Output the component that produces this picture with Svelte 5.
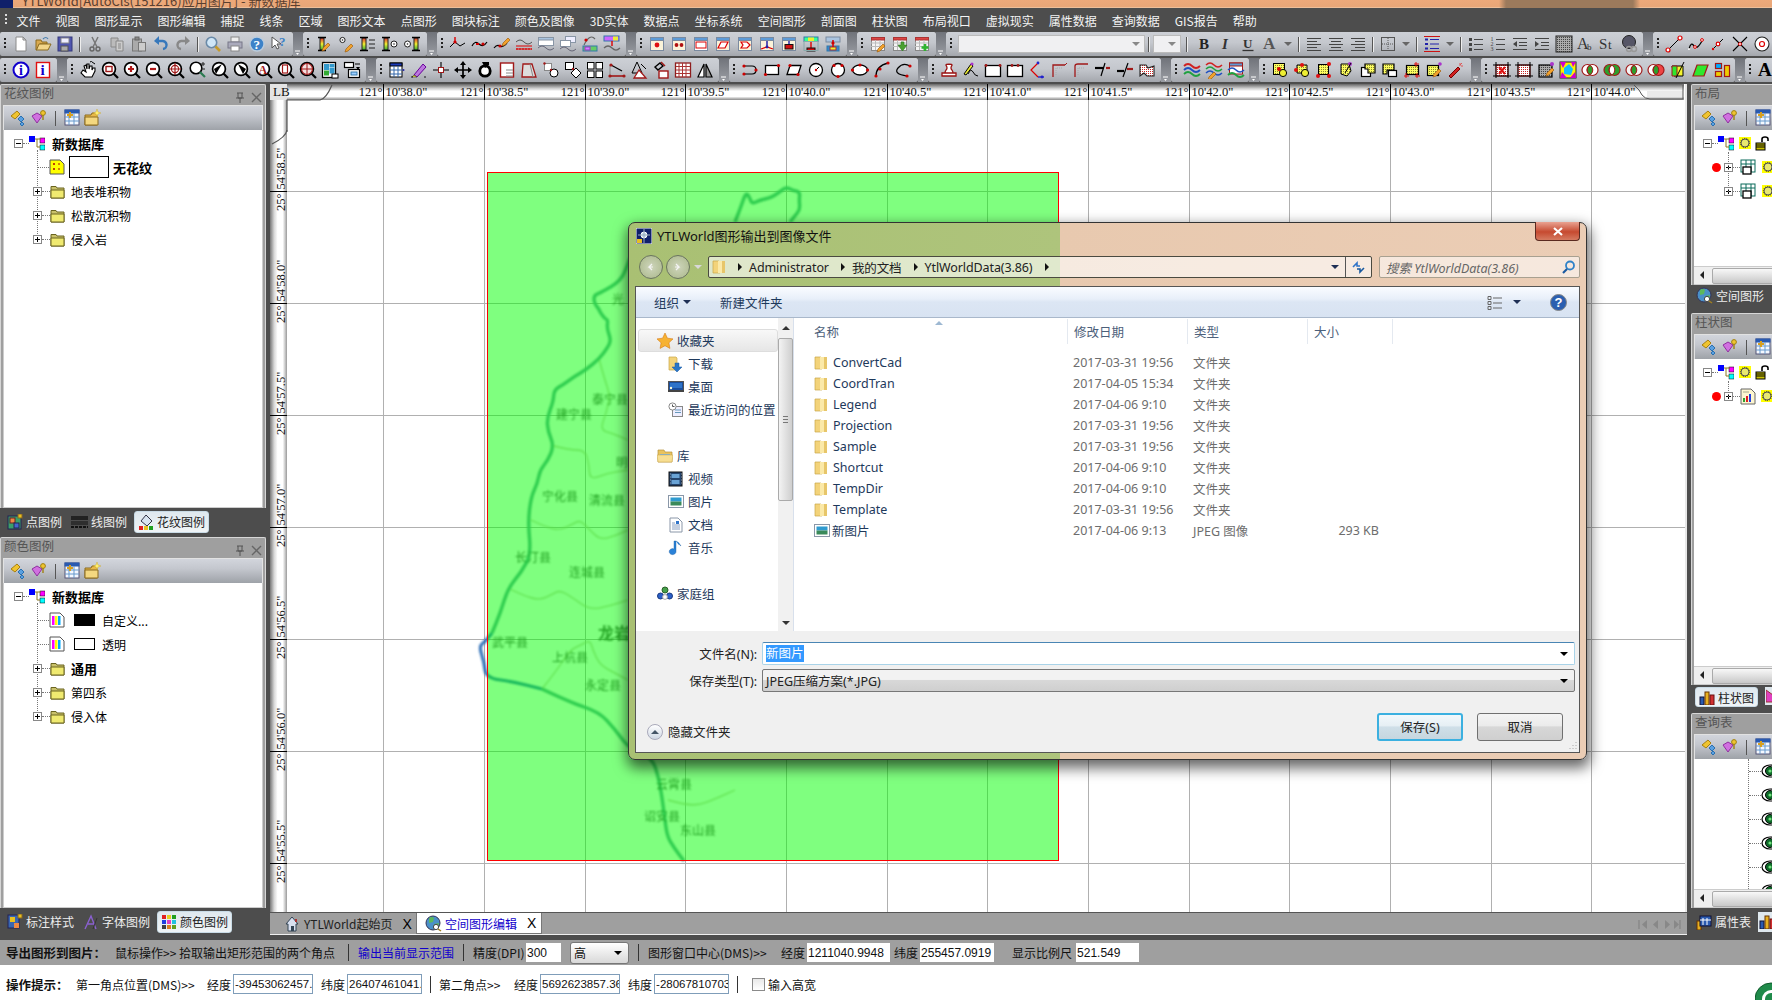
<script>
  const sv = (inner, w = 18, h = 18) => `<svg width="${w}" height="${h}" viewBox="0 0 ${w} ${h}" fill="none">${inner}</svg>`;
  const ln = (d, c = '#000', w = 1) => `<path d="${d}" stroke="${c}" stroke-width="${w}" fill="none"/>`;
  const fl = (d, c, s = 'none', w = 1) => `<path d="${d}" fill="${c}" stroke="${s}" stroke-width="${w}"/>`;
  const rc = (x, y, w, h, f = '#fff', s = '#000', sw = 1) => `<rect x="${x}" y="${y}" width="${w}" height="${h}" fill="${f}" stroke="${s}" stroke-width="${sw}"/>`;
  const dot = (x, y, c = '#c00', r = 1.6) => `<circle cx="${x}" cy="${y}" r="${r}" fill="${c}"/>`;
  const circ = (x, y, r, f = '#fff', s = '#000', w = 1) => `<circle cx="${x}" cy="${y}" r="${r}" fill="${f}" stroke="${s}" stroke-width="${w}"/>`;
  const tx = (x, y, t, size, c = '#000', extra = '') => `<text x="${x}" y="${y}" font-size="${size}" fill="${c}" font-family="Liberation Serif, serif" ${extra}>${t}</text>`;

  const mag = (inner) => sv(circ(8, 8, 6.4, '#fff', '#000', 1.7) + ln('M12.5 12.5L17 17', '#000', 2.2) + inner);
  const bar = (x) => `<defs><linearGradient id="rb" x1="0" y1="0" x2="0" y2="1"><stop offset="0" stop-color="#d33"/><stop offset=".5" stop-color="#ee3"/><stop offset="1" stop-color="#3a3"/></linearGradient></defs>${rc(x, 3, 4, 12, 'url(#rb)', '#222')}${ln(`M${x - 2} 2.5h8M${x - 2} 15.5h8`, '#000', 1.4)}`;
  const pencil = (x, y) => fl(`M${x} ${y}l5-5 2 2-5 5-3 1z`, '#f2a22c', '#a06010', 0.7);
  const win = (inner) => sv(rc(2.5, 2.5, 13, 13, '#fbf3d9', '#7a8aa0') + rc(2.5, 2.5, 13, 3, '#5e9bd8', '#7a8aa0') + inner);
  const tbl = (inner) => sv(rc(2.5, 3.5, 13, 12, '#f4f4f4', '#888') + rc(2.5, 2.5, 13, 2.5, '#d44', '#a33') + ln('M2 8h13M2 11.5h13M6.5 5v10M11 5v10', '#bbb') + inner);
  const yp = 'url(#yh)';
  const hatchDef = '<defs><pattern id="yh" width="2" height="2" patternUnits="userSpaceOnUse"><rect width="2" height="2" fill="#fdfd60"/><rect width="1" height="1" fill="#8a8a30"/></pattern><pattern id="rh" width="2" height="2" patternUnits="userSpaceOnUse"><rect width="2" height="2" fill="#fff"/><rect width="1" height="1" fill="#c22"/></pattern><pattern id="kh" width="2" height="2" patternUnits="userSpaceOnUse"><rect width="2" height="2" fill="#aaa"/><rect width="1" height="1" fill="#444"/></pattern></defs>';
  const yl = (inner) => sv(hatchDef + inner);

  const I = {
    new: sv(fl('M4 2h7l3 3v11H4z', '#fff', '#8a8a8a') + fl('M11 2v3h3z', '#ddd', '#8a8a8a')),
    open: sv(fl('M2 5h5l1 2h5v2H6l-3 6H2z', '#d9a94f', '#8a6a20') + fl('M5 9h12l-3 6H2.5z', '#f2d58a', '#8a6a20') + ln('M9 4q3-3 5 0', '#4a80b0', 1.2)),
    save: sv(rc(2, 2, 14, 14, '#4f55b0', '#35387a') + rc(5, 3, 8, 5, '#eef', '#888') + rc(5, 11, 7, 5, '#aaa', '#555')),
    cut: sv(circ(6, 14, 2, 'none', '#666', 1.4) + circ(12, 14, 2, 'none', '#666', 1.4) + ln('M7 12L12 2M11 12L6 2', '#777', 1.5)),
    copy: sv(fl('M3 3h7v9H3z', '#bbb', '#888') + fl('M8 6h7v10H8z', '#ccc', '#888') + ln('M10 9h3M10 11h3M10 13h3', '#888')),
    paste: sv(rc(2.5, 4, 9, 12, '#aaa', '#777') + rc(5, 2, 4, 3, '#888', '#666') + rc(8.5, 7.5, 7, 8.5, '#ccc', '#777')),
    undo: sv(ln('M5 6h5a4 4 0 0 1 1 8', '#3778bb', 2.4) + fl('M7 1v9L2 6z', '#3778bb')),
    redo: sv(ln('M13 6H8a4 4 0 0 0-1 8', '#888', 2.4) + fl('M11 1v9l5-4z', '#888')),
    find: sv(circ(7.5, 7.5, 5.2, '#cfe6f7', '#6a8aa8', 1.6) + ln('M11.5 11.5L16 16', '#c59a2a', 2.6)),
    print: sv(rc(5, 2, 8, 5, '#eee', '#888') + rc(2, 7, 14, 6, '#aab', '#778') + rc(5, 11, 8, 5, '#fff', '#888')),
    help: sv(circ(9, 9, 7, '#3d82c8', '#bcd', 1.4) + tx(5.5, 13.5, '?', 13, '#fff', 'font-weight="bold"')),
    whats: sv(fl('M2 2v11l3-3 2 4 2-1-2-4h4z', '#fff', '#555') + tx(9, 11, '?', 13, '#3d82c8', 'font-weight="bold"')),
    barp: sv(bar(5) + pencil(8, 13)),
    dotp: sv(circ(5.5, 5, 2.6, '#fff', '#222') + dot(5.5, 5, '#222', .8) + pencil(9, 14)),
    barl: sv(bar(3) + ln('M10 5h6M10 9h6M10 13h6', '#222')),
    barc: sv(bar(3) + circ(13, 9, 3, '#fff', '#222') + dot(13, 9, '#222', .8)),
    cbar: sv(circ(4.5, 9, 3, '#fff', '#222') + dot(4.5, 9, '#222', .8) + bar(11)),
    l1: sv(ln('M1 12L6 7l5 4 5-3') + ln('M6 2v5', '#d00', 1.4) + dot(6, 7)),
    l2: sv(ln('M1 11q3-6 7-2t8-2', '#000', 1.2) + ln('M5 9l3 0', '#d00', 2) + dot(12, 9)),
    l3: sv(ln('M1 13q3-4 6-2t7-3', '#000', 1.2) + pencil(10, 8) + dot(7, 11)),
    l4: sv(ln('M1 7q4-4 8 0t8 0', '#555') + ln('M1 11h16M1 14h16', '#d00', 1.2) + '<path d="M1 14h16" stroke="#d00" stroke-dasharray="2 1"/>'),
    l5: sv(rc(1.5, 2.5, 15, 8, '#fff', '#8895a5') + rc(1.5, 2.5, 15, 2.5, '#aac4e0', '#8895a5') + ln('M1 13q4-4 8 0t8 0', '#667')),
    l6: sv(rc(6.5, 1.5, 10, 6, '#eef', '#8895a5') + rc(1.5, 5.5, 10, 6, '#fff', '#8895a5') + ln('M1 14q4-4 8 0t8 0', '#667')),
    l7: sv(ln('M3 10Q9-2 14 4', '#666', 1.2) + dot(5, 5) + rc(2, 11, 14, 5, '#6c6', '#37a') + rc(4, 12, 5, 3, '#c8f', '#93c')),
    l8: sv(rc(1, 1, 15, 5, '#c6f', '#37a') + rc(10, 1.5, 5, 4, '#ee3', 'none') + ln('M9 6v5', '#d00', 1.4) + ln('M1 13q4-4 8 0t8 0', '#666', 1.2)),
    w1: win(dot(9, 10, '#e01010', 2.4)),
    w2: win(dot(6.5, 10, '#b01010', 1.9) + dot(11.5, 10, '#b01010', 1.9)),
    w3: sv(rc(2.5, 2.5, 13, 13, '#fff', '#7a8aa0') + rc(2.5, 2.5, 13, 3, '#5e9bd8', '#7a8aa0') + rc(4, 7, 10, 6, '#fff', '#d00')),
    w4: win(fl('M7 7h7l-3 6H4z', '#fff', '#d00', 1.2)),
    w5: win(fl('M5 7h6l3 3-3 3H5l2-3z', '#fff', '#d00', 1.2)),
    w6: win(ln('M9 6v6', '#22a', 1.5) + ln('M3 14l6-2 6 2', '#d00', 1.3) + dot(9, 12, '#22a', 1.4)),
    w7: win(ln('M9 6v3', '#22a', 1.4) + rc(5, 9.5, 8, 4.5, '#d01010', '#111')),
    w8: sv(rc(2, 2, 14, 4.5, '#3f9', '#37a') + rc(6, 2.5, 6, 3.5, '#ee3', 'none') + ln('M9 6v7', '#d00', 1.4) + rc(5, 13, 8, 3, '#d01010', '#111') + rc(2, 6.5, 14, 9, 'none', '#8aa')),
    w9: sv(rc(2, 2, 14, 5, '#aac4e0', '#7a8aa0') + rc(3, 11, 12, 5, '#38c', '#37a') + rc(6, 12, 6, 3, '#ee3', '#a33') + ln('M9 5v7', '#d00', 1.5) + dot(9, 8)),
    t1: tbl(pencil(9, 14)),
    t2: tbl(fl('M10 7v3H7l4.5 6 4.5-6h-3V7z', '#4aa030', '#2a7a20', .6)),
    t3: tbl(ln('M12 9v7M8.5 12.5h7', '#2fb52f', 2.6)),
    seg1: sv(ln('M3 15L15 3', '#000') + circ(3, 15, 2, '#fff', '#d00', 1.2) + circ(15, 3, 2, '#fff', '#d00', 1.2)),
    curve: sv(ln('M2 14q2-8 5-3t9-7', '#000', 1.2) + dot(2, 14, '#fff', 1) + circ(8, 12, 1.4, '#fff', '#d00') + circ(15, 5, 1.4, '#fff', '#d00')),
    seg2: sv(ln('M4 14L14 4', '#000') + circ(9, 9, 1.8, '#fff', '#d00', 1.2) + dot(4, 14, '#d00', 1.2)),
    cross: sv(ln('M2 2L16 16M16 2L2 16', '#000', 1.1) + circ(9, 9, 1.5, '#fff', '#d00')),
    target: sv(circ(9, 9, 7, '#fff', '#222', 1.1) + circ(9, 9, 2.5, '#fff', '#d00', 1.2)),
    bold: sv(tx(4, 14, 'B', 15, '#222', 'font-weight="bold"')),
    ital: sv(tx(5, 14, 'I', 15, '#333', 'font-weight="bold" font-style="italic"')),
    und: sv(tx(4, 12.5, 'U', 13, '#333', 'font-weight="bold"') + ln('M3.5 15.5h11', '#333', 1.3)),
    acol: sv(tx(2, 14, 'A', 17, '#555', 'font-weight="bold"')),
    al: sv(ln('M2 3.5h14M2 6.5h10M2 9.5h14M2 12.5h10M2 15.5h14', '#444')),
    ac: sv(ln('M2 3.5h14M4 6.5h10M2 9.5h14M4 12.5h10M2 15.5h14', '#444')),
    ar: sv(ln('M2 3.5h14M6 6.5h10M2 9.5h14M6 12.5h10M2 15.5h14', '#444')),
    grid: sv(rc(2.5, 2.5, 13, 13, 'none', '#555') + '<path d="M9 3v12M3 9h12" stroke="#555" stroke-dasharray="1 1"/>'),
    rlist: sv(ln('M2 4.5h3M2 9h3M2 13.5h3', '#22a', 2) + ln('M7 4.5h9M7 9h9M7 13.5h9', '#22a', 1.2) + ln('M1 1.5h16M1 16.5h16', '#c11', 1.2)),
    bul: sv(rc(2, 3, 3, 3, '#444', 'none') + rc(2, 8, 3, 3, '#444', 'none') + rc(2, 13, 3, 3, '#444', 'none') + ln('M7 4.5h9M7 9.5h9M7 14.5h9', '#444')),
    num: sv(tx(1.5, 6, '1', 6, '#444') + tx(1.5, 11, '2', 6, '#444') + tx(1.5, 16, '3', 6, '#444') + ln('M7 4.5h9M7 9.5h9M7 14.5h9', '#444')),
    ind1: sv(ln('M2 3.5h14M8 7.5h8M8 10.5h8M2 14.5h14', '#444') + fl('M6 6v6L2 9z', '#444')),
    ind2: sv(ln('M2 3.5h14M8 7.5h8M8 10.5h8M2 14.5h14', '#444') + fl('M2 6v6l4-3z', '#444')),
    hat: yl(rc(1, 1, 16, 16, 'url(#kh)', '#222')),
    ab: sv(tx(0, 14, 'A', 16, '#333') + tx(10, 15, 'b', 9, '#333')),
    st: sv(tx(0, 14, 'S', 15, '#333') + tx(9, 14, 't', 13, '#333')),
    chain: sv(circ(8, 7, 6.5, '#556', '#222') + circ(8, 14, 2.5, 'none', '#999', 1.5) + circ(13, 14, 2.5, 'none', '#999', 1.5)),
    infoB: sv(circ(9, 9, 7.5, '#fff', '#10c', 2) + tx(7, 14, 'i', 14, '#10c', 'font-weight="bold"')),
    infoR: sv(rc(2.5, 1.5, 13, 15, '#fff', '#e01010', 1.4) + tx(6.5, 14, 'i', 15, '#10c', 'font-weight="bold"')),
    hand: sv(fl('M4 9l-2 3 4 4h7l3-6V7l-2 0-1 2V5l-2 0-1 3V3l-2 0v5L7 4 5 5l2 6z', '#fff', '#000', 1.1) + ln('M13 1l3 2M11 1l2-1', '#000')),
    zbox: mag(rc(5, 5.5, 6, 5, 'none', '#a01818', 1.4)),
    zin: mag(ln('M5 8h6M8 5v6', '#b01818', 2.2)),
    zout: mag(ln('M5 8h6', '#b01818', 2.2)),
    zfull: mag(ln('M8 2v12M2 8h12', '#a01818', 1.2) + circ(8, 8, 3.6, 'none', '#a01818', 1.1)),
    zpm: sv(circ(7, 7, 5.8, '#fff', '#000', 1.6) + ln('M11 11L16 16', '#2a7a50', 2.2) + ln('M14 1v4M12 3h4M12 8h4', '#222')),
    zl: mag(fl('M11 3L5 13l-2-5z', '#000')),
    zr: mag(fl('M5 3l8 5-3 5z', '#000')),
    za: mag(tx(3.5, 12.5, 'A', 12, '#a01818', 'font-weight="bold"')),
    zpg: mag(rc(5.5, 4, 5, 8, '#fff', '#a01818', 1.2)),
    zred: mag(circ(8, 8, 5.5, '#f3e0e0', '#a01818', 1.2) + ln('M8 2.5v11M2.5 8h11', '#a01818')),
    bins: sv(rc(1.5, 1.5, 13, 15, '#fff', '#000', 1.3) + rc(3.5, 3.5, 4, 5, '#39c', '#39c') + rc(9, 3.5, 4, 2, '#39c', '#39c') + rc(3.5, 10, 4, 4, '#3a3', '#3a3') + rc(9, 7, 4, 5, '#39c', '#39c') + rc(11, 13, 6, 4, '#fff', '#000')),
    bwin: sv(rc(1.5, 1.5, 9, 5, '#fff', '#000', 1.2) + ln('M12 3h5', '#000', 1) + fl('M13 6h4l-2 3z', '#000') + rc(5.5, 8.5, 11, 8, '#fff', '#000', 1.2) + rc(8, 11, 6, 3, '#9cf', '#37a')),
    tbw: sv(rc(2, 2, 12, 14, '#fff', '#000') + rc(2, 2, 12, 3, '#1a3ab8', '#000') + ln('M6 5v11M10 5v11M2 9h12M2 13h12', '#36a') + dot(15.5, 9, '#22a', 1)),
    pen2: sv(fl('M4 14L13 3l3 3-9 10z', '#b7d', '#609') + fl('M4 14l-2 2 5 0z', '#ee3', '#222', .5) + dot(2, 16, '#000', .8) + dot(15, 16, '#000', .8)),
    xh: sv(ln('M9 1v16M1 9h16', '#000', 1.1) + rc(6.5, 6.5, 5, 5, '#fff', '#a01818', 1)),
    move: sv(ln('M9 2v14M2 9h14', '#000', 1.7) + fl('M9 0l3 4H6zM9 18l3-4H6zM0 9l4-3v6zM18 9l-4-3v6z', '#000')),
    rot: sv(circ(9, 10, 5.2, '#fff', '#000', 2.8) + fl('M6 1h7v3l-4 3z', '#000')),
    rsq: sv(rc(2.5, 2, 13, 14, '#fff', '#a01818', 1.4) + ln('M8 9h7M8 12h7M8 15h7', '#888', 1) ),
    rtr: sv(fl('M3 3h9l4 13H2z', '#ddd', '#a01818', 1.3) + ln('M10 3l3 13', '#888')),
    cs: sv(circ(12, 12, 4, '#fff', '#000') + rc(2.5, 2.5, 7, 7, '#fff', '#888') + dot(2.5, 2.5, '#a01818', 1.2) + dot(9, 9, '#a01818', 1.2)),
    sd: sv(rc(1.5, 1.5, 8, 7, '#fff', '#000') + fl('M12 7l5 5-5 5-5-5z', '#fff', '#000') + dot(9, 8, '#a01818', 1.2)),
    four: sv(rc(1.5, 1.5, 6.5, 6.5, '#fff', '#000') + rc(10, 1.5, 6.5, 6.5, '#fff', '#000') + rc(1.5, 10, 6.5, 6.5, '#fff', '#000') + rc(10, 10, 6.5, 6.5, '#fff', '#000')),
    sc1: sv(ln('M3 4L14 10', '#000', 1.2) + ln('M2 15h14', '#a01818', 1.6) + ln('M2 4l0 11', '#888') + dot(3, 4, '#a01818') + dot(16, 15, '#a01818') + dot(2, 15, '#a01818')),
    tri: sv(ln('M7 1l-5 11h10z', '#000') + fl('M9 9l7 8H4z', '#fff', '#a01818', 1.3) + ln('M11 3l5 5', '#000')),
    bxa: sv(ln('M3 6l5-4 3 3-5 4z', '#000', 1.4) + ln('M9 1l4 4', '#a01818', 1.5) + rc(7, 10, 9, 7, '#fff', '#a01818', 1.4)),
    rgrid: sv(rc(1.5, 2, 15, 14, '#fff', '#8e1d1d', 1.3) + ln('M5 2v14M8.5 2v14M12 2v14M2 5.5h14M2 9h14M2 12.5h14', '#a33', 1)),
    mir: sv(fl('M8 3v13H2z', '#fff', '#000', 1.2) + fl('M10 3v13h6z', '#999', '#000', 1.2)),
    cu1: sv(ln('M2 5h9q4 0 4 4t-4 4H2', '#000', 1.2) + dot(3, 5) + dot(3, 13) + dot(15, 9)),
    cu2: sv(rc(2.5, 4.5, 13, 9, '#fff', '#000', 1.3) + dot(2.5, 13.5) + dot(15.5, 4.5)),
    cu3: sv(fl('M5 4.5h11l-3 9H2z', '#fff', '#000', 1.3) + dot(5, 4.5) + dot(13, 13.5)),
    cu4: sv(circ(9, 9, 6.5, '#fff', '#000', 1.3) + ln('M9 9l3-3', '#000') + dot(9, 9, '#c00', 1.2)),
    cu5: sv(circ(9, 9, 6.5, '#fff', '#000', 1.3) + dot(5, 4.5) + dot(13, 4.5) + dot(9, 15.5)),
    cu6: sv('<ellipse cx="9" cy="9" rx="7.5" ry="5" fill="#fff" stroke="#000" stroke-width="1.3"/>' + dot(1.5, 9) + dot(16.5, 9) + dot(9, 4)),
    cu7: sv(ln('M3 15q0-10 12-13', '#000', 1.3) + dot(3, 15) + dot(15, 2) + dot(7, 8)),
    cu8: sv(ln('M15 5Q8 1 3 7t9 8', '#000', 1.2) + dot(15, 5) + dot(12, 15)),
    stp: sv(fl('M2 12h14v3H2zM5 12c0-3 2-3 2-5s-1-2-1-3 6-1 6 0 -1 1-1 3 2 2 2 5z', '#fff', '#911', 1.3)),
    pen3: sv(fl('M2 13L9 3l2 2-7 9z', '#ee3', '#000') + ln('M6 13q3-6 5-2t5 4', '#000') + dot(10, 3, '#a3c', 1.6)),
    rbox: sv(rc(1.5, 4.5, 15, 11, '#fff', '#000', 1.3) + dot(2, 4.5, '#a01818', 1.4) + dot(16, 4.5, '#a01818', 1.4)),
    rbox2: sv(rc(1.5, 4.5, 15, 11, '#fff', '#000', 1.3) + dot(6, 4.5, '#a01818', 1.4) + dot(12, 4.5, '#a01818', 1.4)),
    corn: sv(ln('M10 2L3 9l7 7', '#d00', 1.2) + ln('M10 16h6', '#22c', 1.4) + dot(10, 2, '#22c', 1.4) + dot(14, 16, '#22c', 1.4)),
    ext1: sv(ln('M3 16V4h12', '#a01818', 1.3) + '<path d="M6 14V7h7" stroke="#aaa" stroke-dasharray="1 1"/>' + ln('M15 4l2-2', '#a01818')),
    ext2: sv(ln('M3 16V5q0-2 3-2h10', '#a01818', 1.3) + '<path d="M6 14V7h7" stroke="#aaa" stroke-dasharray="1 1"/>'),
    dash: sv(ln('M1 7h9', '#000', 2.2) + ln('M12 7h4', '#a01818', 2.2) + ln('M11 2L7 15', '#000', 1.2)),
    dash2: sv(ln('M1 10h7', '#000', 2.2) + ln('M11 8h6', '#a01818', 2.2) + ln('M12 2L7 16', '#000', 1.2)),
    cloud: yl(fl('M2 4h6l2 3 6-2v10H9l-3-3-4 3z', 'url(#rh)', '#222', 1.1)),
    wv1: sv(ln('M1 5q4-4 8 0t8 0', '#d02020', 1.8) + ln('M1 9q4-4 8 0t8 0', '#2050c0', 1.8) + ln('M1 13q4-4 8 0t8 0', '#20a040', 1.8)),
    wv2: sv(ln('M1 4q4-4 8 0t8 0', '#d02020', 1.5) + ln('M1 8q4-4 8 0t8 0', '#20a040', 1.5) + ln('M1 12q4-4 8 0t8 0', '#2050c0', 1.5) + pencil(4, 16)),
    wv3: sv(rc(2.5, 2, 13, 11, '#fff', '#a01818') + rc(2.5, 2, 13, 3, '#5e9bd8', '#a01818') + ln('M1 9q4-4 8 0t8 0', '#2050c0', 1.5) + ln('M1 14q4-4 8 0t8 0', '#20a040', 1.8)),
    y1: yl(rc(2.5, 2.5, 11, 11, yp, '#000') + circ(12, 12, 3.6, '#ee3', '#000') + dot(8, 8, '#d00', 2)),
    y2: yl(fl('M4 4h10v8H4z', yp, '#000') + circ(12, 12, 3.6, '#ee3', '#000') + dot(3, 9, '#e01010', 2) + dot(9, 4, '#e01010', 2)),
    y3: yl(rc(3.5, 3.5, 10, 10, yp, '#000') + dot(14, 3, '#e01010', 2) + dot(3, 15, '#e01010', 2) + dot(14, 15, '#e01010', 2)),
    y4: yl(fl('M4 3h8l2 7-4 5-6-2z', yp, '#000') + dot(13, 3, '#a3c', 2) + ln('M14 2l-6 10', '#000')),
    y5: yl(rc(2.5, 6.5, 9, 9, '#fff', '#000', 1.2) + fl('M6 3h10v9H9V8H6z', yp, '#000', 1.2)),
    y6: yl(fl('M2 3h11v6H6v4H2z', yp, '#000', 1.2) + rc(7.5, 9.5, 8, 6, '#fff', '#000', 1.2)),
    y7: yl(rc(3.5, 4.5, 12, 9, yp, '#000', 1.2) + ln('M13 1v5M11 3h5M3 12v5M1 15h5M14 12v5M12 15h5', '#e01010', 1)),
    y8: yl(rc(2.5, 4.5, 11, 10, yp, '#000', 1.2) + pencil(9, 13) + dot(15, 3, '#a3c', 1.8)),
    fw: sv(fl('M2 15L11 6l2 2-9 9z', '#d02020', '#700') + ln('M13 2v3M16 5h-2M15 2l-2 2', '#d55')),
    rh1: yl(rc(3, 4, 12, 11, 'url(#rh)', '#a01818') + fl('M6 6l6 7M12 6l-6 7', 'none', '#d11', 2) + ln('M3 1v16M15 1v16M0 4h18M0 15h18', '#000', 1)),
    rh2: yl(rc(3, 4, 12, 11, 'url(#rh)', '#a01818') + ln('M3 1v16M15 1v16M0 4h18M0 15h18', '#000', 1)),
    rh3: yl(rc(2, 4, 13, 12, 'url(#kh)', '#000', 1.2) + pencil(10, 12) + dot(15, 3, '#a3c', 2)),
    col: sv(rc(1, 1, 16, 16, '#ffee00', '#222') + fl('M1 1h6l-3 6zM17 1h-5l2 5zM1 17h7L3 11zM17 17h-6l5-6z', '#d000d0') + fl('M5 7l5-4 4 5-2 6-7-1z', '#10c0ff')),
    op: (a, b, c) => sv(`<circle cx="6.5" cy="9" r="5.5" fill="${a}" stroke="#a01818" stroke-width="1.2"/><circle cx="11.5" cy="9" r="5.5" fill="${b}" stroke="#a01818" stroke-width="1.2"/><path d="M9 4.2a5.5 5.5 0 0 1 0 9.6a5.5 5.5 0 0 1 0-9.6z" fill="${c}" stroke="#a01818"/>`),
    gb1: sv(fl('M3 5h11v10L5 15z', '#f4f430', '#000') + fl('M3 5h5v10H3z', '#2ee82e', '#a01818') + ln('M15 1L7 17', '#000')),
    gb2: sv(fl('M6 4h11l-4 11H2z', '#2ee82e', '#a01818', 1.2)),
    gb3: sv(rc(2.5, 2.5, 6, 5, '#0af', '#a01818', 1.2) + rc(2.5, 10.5, 6, 5, '#ec0', '#a01818', 1.2) + rc(11.5, 4.5, 5, 11, '#ec0', '#a01818', 1.2)),
    bigA: sv(tx(1, 15, 'A', 19, '#000', 'font-weight="bold"'))
  };
  I.o1 = I.op('#fff', '#fff', '#2ca02c');
  I.o2 = I.op('#2ca02c', '#2ca02c', '#fff');
  I.o3 = I.op('#f4f4f4', '#f4f4f4', '#2ca02c');
  I.o4 = I.op('#fff', '#e44', '#2ca02c');

  const row1 = [
    { w: 293, items: ['new', 'open', 'save', '|', 'cut', 'copy', 'paste', 'undo', 'redo', '|', 'find', 'print', 'help', 'whats'] },
    { w: 124, items: ['barp', 'dotp', 'barl', 'barc', 'cbar'] },
    { w: 189, items: ['l1', 'l2', 'l3', 'l4', 'l5', 'l6', 'l7', 'l8'] },
    { w: 211, items: ['w1', 'w2', 'w3', 'w4', 'w5', 'w6', 'w7', 'w8', 'w9'] },
    { w: 79, items: ['t1', 't2', 't3'] },
    { w: 697, items: [{ combo: 187, ml: 2 }, '|', { combo: 28, ml: 0 }, '||', 'bold', 'ital', 'und', 'acol', 'v', '|', 'al', 'ac', 'ar', '|', 'grid', 'v', '|', 'rlist', 'v', '|', 'bul', 'num', 'ind1', 'ind2', 'hat', 'ab', 'st', 'chain'] },
    { w: 140, items: ['seg1', 'curve', 'seg2', 'cross', 'target'] }
  ];
  const row2 = [
    { w: 57, items: ['infoB', 'infoR'] },
    { w: 299, items: ['hand', 'zbox', 'zin', 'zout', 'zfull', 'zpm', 'zl', 'zr', 'za', 'zpg', 'zred', 'bins', 'bwin'] },
    { w: 343, items: ['tbw', 'pen2', 'xh', 'move', 'rot', 'rsq', 'rtr', 'cs', 'sd', 'four', 'sc1', 'tri', 'bxa', 'rgrid', 'mir'] },
    { w: 189, items: ['cu1', 'cu2', 'cu3', 'cu4', 'cu5', 'cu6', 'cu7', 'cu8'] },
    { w: 233, items: ['stp', 'pen3', 'rbox', 'rbox2', 'corn', 'ext1', 'ext2', 'dash', 'dash2', 'cloud'] },
    { w: 78, items: ['wv1', 'wv2', 'wv3'] },
    { w: 212, items: ['y1', 'y2', 'y3', 'y4', 'y5', 'y6', 'y7', 'y8', 'fw'] },
    { w: 254, items: ['rh1', 'rh2', 'rh3', 'col', 'o1', 'o2', 'o3', 'o4', 'gb1', 'gb2', 'gb3'] },
    { w: 40, items: ['bigA'] }
  ];

  const menus = ['文件', '视图', '图形显示', '图形编辑', '捕捉', '线条', '区域', '图形文本', '点图形', '图块标注', '颜色及图像', '3D实体', '数据点', '坐标系统', '空间图形', '剖面图', '柱状图', '布局视口', '虚拟现实', '属性数据', '查询数据', 'GIS报告', '帮助'];

  const rootIco = sv(rc(0, 1, 6, 6, '#00f', 'none') + rc(11, 3, 5, 5, '#f0f', '#000', .5) + rc(11, 10, 5, 5, '#0ff', '#000', .5) + ln('M6 4h6M8 4v8h3', '#8a7a20'), 16, 16);
  const folderIco = sv(fl('M1 4V2.5h5l1 1.5h7v10H1z', '#c9c16a', '#6a6420') + fl('M1 6h13v8H1z', '#f0ea70', '#6a6420'), 15, 15);
  const yDoc = sv(fl('M1 1h10l4 4v10H1z', '#ffff00', '#555') + ln('M4 5h2M9 5h2M4 10h2M9 10h2M5 4v2M5 9v2', '#a00'), 16, 16);
  const cDoc = sv(fl('M1 1h10l4 4v10H1z', '#fff', '#555') + rc(3, 4, 2.5, 9, '#f0f', 'none') + rc(6, 4, 2.5, 9, '#ff0', 'none') + rc(9, 4, 2.5, 9, '#0af', 'none'), 16, 16);
  const tPanel1 = sv(fl('M1 7l6-5 3 3-5 5z', '#f0c430', '#a88010') + fl('M8 10l3-3 3 3-3 3z', '#5aa0e0', '#2a70b0') + fl('M10 15l2-2 2 2-2 2z', '#5aa0e0', '#2a70b0'), 16, 18);
  const tPanel2 = sv(fl('M2 7l5-3 5 3-5 7z', '#d070e0', '#9030a0') + circ(13, 4, 2.4, '#f0c430', '#a08010') + ln('M13 6v5', '#a08010', 1.4), 17, 18);
  const tPanel3 = sv(rc(1, 1, 14, 15, '#f4f8ff', '#557') + rc(1, 1, 14, 3, '#2a5ab0', '#2a5ab0') + ln('M5 4v12M10 4v12M1 8h14M1 12h14', '#69c') + ln('M6 3v6M3 6h6', '#d8a020', 2), 16, 18);
  const tPanel4 = sv(fl('M1 6h6l1-2h5v12H1z', '#e8b848', '#8a6a20') + fl('M1 8h13v8H1z', '#f4d880', '#8a6a20') + fl('M13 0l1 3 3 1-3 1-1 3-1-3-3-1 3-1z', '#fff070', '#c8a020', .4), 18, 18);
  const tabIcoPt = sv(rc(1, 2, 13, 13, '#3aa06a', '#225') + rc(3, 4, 5, 5, '#e84', '#622') + rc(7, 9, 5, 5, '#46c', '#225') + rc(11, 0, 4, 4, '#e8c020', '#862'), 16, 16);
  const tabIcoLn = sv(rc(0, 2, 17, 4, '#222', 'none') + ln('M0 8h17M0 10h17', '#111') + '<path d="M0 13h17" stroke="#111" stroke-width="2" stroke-dasharray="3 1"/>', 17, 16);
  const tabIcoPat = sv(fl('M3 7l5-6 6 6-5 5z', '#d8e4f0', '#334') + rc(1, 12, 4, 4, '#e02020', 'none') + rc(6, 12, 4, 4, '#e8c020', 'none') + rc(11, 12, 4, 4, '#20a020', 'none'), 16, 16);
  const tabIcoAnno = sv(rc(1, 1, 11, 13, '#3a66b0', '#225') + rc(3, 3, 5, 5, '#e8c020', 'none') + rc(7, 9, 5, 5, '#e84', 'none') + rc(11, 0, 4, 4, '#e8c020', '#862'), 16, 16);
  const tabIcoFont = sv(ln('M2 15L8 2l5 13M5 10h6', '#8a60d0', 1.4) + ln('M10 15L14 4', '#333'), 16, 16);
  const tabIcoCol = sv(rc(1, 1, 4, 4, '#e02020', 'none') + rc(6, 1, 4, 4, '#e8d020', 'none') + rc(11, 1, 4, 4, '#20a020', 'none') + rc(1, 6, 4, 4, '#2040e0', 'none') + rc(6, 6, 4, 4, '#e040c0', 'none') + rc(11, 6, 4, 4, '#20c0e0', 'none') + rc(1, 11, 4, 4, '#404040', 'none') + rc(6, 11, 4, 4, '#e08020', 'none') + rc(11, 11, 4, 4, '#60a020', 'none'), 16, 16);
  const globe = sv(circ(8, 8, 7, '#4a90c8', '#335') + fl('M4 3q3-2 5 0l-1 4-4 1zM9 9l5-1-1 5-4 0z', '#5cb85c') + circ(11, 12, 2.6, '#fff', '#444') + ln('M13 14l3 2', '#a08020', 1.5), 17, 17);
  const house = sv(fl('M7 1L1 8h2v7h8V8h2z', '#d8e0f0', '#345') + rc(6, 10, 3, 5, '#345', 'none') + rc(10, 3, 2, 3, '#a33', 'none'), 15, 16);
  const barIco = sv(rc(1, 8, 4, 8, '#2a5ab0', '#113') + rc(6, 3, 4, 13, '#e8b020', '#630') + rc(11, 6, 4, 10, '#d03030', '#611'), 16, 16);
  const propIco = sv(rc(1, 7, 4, 9, '#e8b020', '#630') + rc(4, 2, 11, 10, '#2a5ab0', '#113') + ln('M7 4v7M11 4v7M4 6h11', '#fff'), 16, 16);
  const gear = sv(rc(0, 0, 12, 12, '#ffff00', 'none') + circ(6, 6, 4, '#e8e870', '#555') + '<circle cx="6" cy="6" r="4.6" fill="none" stroke="#333" stroke-dasharray="1 1"/>', 12, 12);
  const lock = sv(rc(1, 7, 9, 7, '#c8c000', '#000') + ln('M1 9h9M1 11h9', '#000') + ln('M7 6V3q0-2 3-2t3 2v2', '#000', 1.6), 15, 15);
  const tblIco = sv(rc(1, 1, 14, 12, '#fff', '#0a6a5a') + ln('M1 5h14M6 1v12M11 1v12', '#0a6a5a') + rc(3, 8, 8, 7, '#fff', '#000', 1.3), 17, 16);
  const chartDoc = sv(fl('M1 1h10l4 4v11H1z', '#fdf6d0', '#666') + rc(3, 10, 2, 4, '#30a030', 'none') + rc(6, 8, 2, 6, '#e02020', 'none') + rc(9, 6, 2, 8, '#2040e0', 'none') + ln('M3 4h6', '#aa8'), 16, 17);
  const eye = sv(`<ellipse cx="9" cy="9" rx="8" ry="6" fill="#fff" stroke="#000" stroke-width="1.2"/>` + circ(9, 9, 4.5, '#0f6a2a', '#000') + circ(9, 9, 1.6, '#6fe07a', 'none') + dot(14, 14, '#ff0', 2), 18, 18);

  const tree1 = [
    { t: 'root', text: '新数据库' },
    { t: 'item', icon: yDoc, sw: 'big', text: '无花纹', bold: true },
    { t: 'folder', text: '地表堆积物' },
    { t: 'folder', text: '松散沉积物' },
    { t: 'folder', text: '侵入岩' }
  ];
  const tree2 = [
    { t: 'root', text: '新数据库' },
    { t: 'item', icon: cDoc, sw: 'black', text: '自定义...' },
    { t: 'item', icon: cDoc, sw: 'clear', text: '透明' },
    { t: 'folder', text: '通用', bold: true },
    { t: 'folder', text: '第四系' },
    { t: 'folder', text: '侵入体' }
  ];

  const lon = ['38.0', '38.5', '39.0', '39.5', '40.0', '40.5', '41.0', '41.5', '42.0', '42.5', '43.0', '43.5', '44.0'];
  const lonX = [383.5, 484.5, 585.5, 685.5, 786.5, 887.5, 987.5, 1088.5, 1189.5, 1289.5, 1390.5, 1491.5, 1591.5];
  const lat = ['58.5', '58.0', '57.5', '57.0', '56.5', '56.0', '55.5'];
  const latY = [191.5, 303.5, 415.5, 527.5, 639.5, 751.5, 863.5];
  const labels = [
    ['光', 618, 304, 12], ['泰宁县', 610, 404, 12], ['建宁县', 574, 419, 12], ['明', 622, 467, 12], ['宁化县', 560, 501, 12], ['清流县', 607, 505, 12],
    ['长汀县', 533, 562, 12], ['连城县', 587, 577, 12], ['武平县', 510, 647, 12], ['上杭县', 570, 662, 12], ['永定县', 603, 690, 12],
    ['龙岩', 614, 639, 16], ['云霄县', 674, 789, 12], ['诏安县', 662, 821, 12], ['东山县', 698, 835, 12]
  ];

  // turns a coarse outline into a wavering smooth path (a coastline, a county border)
  const wavy = (pts, amp = 3) => {
    const out = [];
    pts.forEach((p, i) => {
      out.push(p);
      const q = pts[i + 1];
      if (q) out.push([(p[0] + q[0]) / 2 + Math.sin(i * 2.3) * amp, (p[1] + q[1]) / 2 + Math.cos(i * 1.7) * amp]);
    });
    let d = `M${out[0][0]} ${out[0][1]}`;
    for (let i = 1; i < out.length - 1; i++) {
      const mx = (out[i][0] + out[i + 1][0]) / 2, my = (out[i][1] + out[i + 1][1]) / 2;
      d += `Q${out[i][0]} ${out[i][1]} ${mx} ${my}`;
    }
    return d + `L${out[out.length - 1][0]} ${out[out.length - 1][1]}`;
  };
  const coast = [
    wavy([[735, 222], [746, 192], [752, 204], [770, 198], [786, 187], [800, 192], [800, 209], [790, 222]], 1),
    wavy([[630, 258], [620, 280], [600, 293], [594, 303], [600, 312], [608, 320], [611, 340], [599, 359], [575, 376], [554, 390], [547, 418], [554, 446], [540, 470], [531, 497], [531, 554], [508, 588], [492, 633]], 3),
    wavy([[542, 689], [599, 712], [627, 746], [653, 760], [661, 791], [667, 836], [684, 861]], 2)
  ];
  const coastTip = wavy([[492, 633], [479, 646], [486, 678], [542, 689]], 2);
  const counties = [
    [[554, 446], [585, 450], [590, 480], [628, 470]], [[531, 520], [560, 530], [580, 520], [600, 540], [628, 530]],
    [[508, 588], [540, 600], [560, 590], [590, 610], [628, 600]], [[542, 689], [570, 650], [590, 640], [600, 665], [628, 680]],
    [[599, 359], [610, 395], [600, 430], [628, 440]], [[668, 800], [700, 805], [735, 790]]
  ].map((p) => wavy(p, 2));

  const sidebar = [
    { text: '收藏夹', lv: 0, ic: 'star', hov: true }, { text: '下载', lv: 1, ic: 'dl' }, { text: '桌面', lv: 1, ic: 'desk' }, { text: '最近访问的位置', lv: 1, ic: 'recent' },
    { text: '' }, { text: '库', lv: 0, ic: 'lib' }, { text: '视频', lv: 1, ic: 'film' }, { text: '图片', lv: 1, ic: 'pic' }, { text: '文档', lv: 1, ic: 'doc' }, { text: '音乐', lv: 1, ic: 'music' },
    { text: '' }, { text: '家庭组', lv: 0, ic: 'home' }
  ];
  const picIco = sv(rc(.5, 1.5, 15, 12, '#fff', '#8a97a8') + `<rect x="2.5" y="3.5" width="11" height="4" fill="#2f9bd0"/><rect x="2.5" y="7.5" width="11" height="4" fill="#3a8a5a"/>`, 16, 15);
  const fIco = sv(`<path d="M1 2h6l1 1v11H1z" fill="#f3d37a" stroke="#c9a648" stroke-width=".7"/><path d="M6 2h5v12H6z" fill="#fbe9a8"/><path d="M10 2h3v12h-3z" fill="#e7c66a"/>`, 14, 16);
  const sIcons = {
    star: sv(fl('M8 0l2.4 5.2 5.6.7-4.1 3.9 1 5.6L8 12.7 3.1 15.4l1-5.6L0 5.9l5.6-.7z', '#f6b233', '#d97b10', .6), 16, 16),
    dl: sv(`<path d="M1 1h7l1 1v12H1z" fill="#f3d37a" stroke="#c9a648" stroke-width=".7"/>` + fl('M7 7h4v4h3l-5 5-5-5h3z', '#2a76c8', '#1a5aa0', .5), 15, 16),
    desk: sv(rc(.5, 2.5, 15, 10, '#1c4f9c', '#555') + rc(2, 4, 12, 5, '#2f74c9', 'none') + rc(0, 11, 16, 2, '#444', 'none') + dot(3, 9, '#ffd', 1.2), 16, 15),
    recent: sv(rc(4.5, 4.5, 10, 10, '#eef', '#888') + circ(4.5, 4.5, 3.6, '#fff', '#888') + ln('M4.5 2.5v2h2', '#555') + ln('M7 8h6M7 10.5h6', '#69b'), 16, 16),
    lib: sv(fl('M1 4V2h6l1 2h7v10H1z', '#e9c35e', '#b8923a', .7) + rc(3, 6, 10, 5, '#7ab3e0', 'none') + fl('M0 7h16l-1 7H1z', '#f7de92', '#c9a648', .5), 16, 15),
    film: sv(rc(1, 1, 13, 14, '#25456e', '#111') + rc(3.5, 3, 8, 4, '#6aa3d5', 'none') + rc(3.5, 9, 8, 4, '#6aa3d5', 'none') + ln('M2 3h.5M2 6h.5M2 9h.5M2 12h.5M13 3h.5M13 6h.5M13 9h.5M13 12h.5', '#fff'), 15, 16),
    pic: picIco,
    doc: sv(fl('M2 1h8l4 4v10H2z', '#fff', '#8a97a8') + ln('M4 6h3M4 8h8M4 10h8M4 12h8', '#8aa0c0') + rc(8, 4, 3, 3, '#2f74c9', 'none'), 15, 16),
    music: sv(fl('M8 1v10.5a3.4 3 0 1 1-2-2.6V1zq3 1 5 5-2-2-3-2', '#2a82d8', '#1a5aa0', .4), 15, 16),
    home: sv(circ(8, 4, 3, '#46a04a', '#2a602a') + circ(3.5, 10, 3, '#2a60c8', '#1a3a80') + circ(12.5, 10, 3, '#2a60c8', '#1a3a80') + circ(8, 11, 2.4, '#fff', '#aaa'), 16, 15)
  };
  const files = [
    ['ConvertCad', '2017-03-31 19:56'], ['CoordTran', '2017-04-05 15:34'], ['Legend', '2017-04-06 9:10'], ['Projection', '2017-03-31 19:56'],
    ['Sample', '2017-03-31 19:56'], ['Shortcut', '2017-04-06 9:10'], ['TempDir', '2017-04-06 9:10'], ['Template', '2017-03-31 19:56']
  ];
  const addr = ['Administrator', '我的文档', 'YtlWorldData(3.86)'];
  const rightRows1 = [{ dot: true }, {}];
  const queryRows = [1, 2, 3, 4, 5, 6];
</script>

{#snippet panelHead(title, closeBtn = true)}
  <div class="ph">
    <span class="ph-t">{title}</span>
    {#if closeBtn}
      <span class="pin">{@html sv(ln('M3 1h6M4 1v5h4V1M2 6h8M6 6v5', '#555'), 12, 12)}</span>
      <span class="cls">{@html sv(ln('M1 1l9 9M10 1L1 10', '#666', 1.4), 12, 12)}</span>
    {/if}
  </div>
  <div class="ptb">
    <span>{@html tPanel1}</span><span>{@html tPanel2}</span><i class="ptb-sep"></i><span>{@html tPanel3}</span><span>{@html tPanel4}</span>
  </div>
{/snippet}

{#snippet tree(rows)}
  <div class="tree">
    <i class="tree-v" style="height:{(rows.length - 1) * 24 - 8}px"></i>
    {#each rows as r}
      {#if r.t === 'root'}
        <div class="tr tr-root"><i class="box minus"></i><i class="dots d7"></i><span class="ti">{@html rootIco}</span><b class="tt-root">{r.text}</b></div>
      {:else if r.t === 'item'}
        <div class="tr tr-item"><i class="dots d12"></i><span class="ti">{@html r.icon}</span>
          <i class="sw sw-{r.sw}"></i><span class:bold={r.bold} class="tt">{r.text}</span></div>
      {:else}
        <div class="tr tr-folder"><i class="box plus"></i><i class="dots d9"></i><span class="ti">{@html folderIco}</span><span class:bold={r.bold} class="tt tt-f">{r.text}</span></div>
      {/if}
    {/each}
  </div>
{/snippet}

{#snippet toolbar(groups)}
  <div class="tbar">
    {#each groups as g}
      <div class="grp" style="width:{g.w}px">
        <i class="grip"></i>
        {#each g.items as it}
          {#if it === '|'}<i class="tsep"></i>
          {:else if it === '||'}<i class="tsep wide"></i>
          {:else if it === 'v'}<i class="drop"></i>
          {:else if it.combo}<span class="combo" class:mleft={it.ml} style="width:{it.combo}px"><i class="combo-a"></i></span>
          {:else}<span class="tbtn">{@html I[it]}</span>{/if}
        {/each}
      </div>
      <div class="chev">{@html sv(ln('M2 19h5', '#fff', 1) + fl('M3 21h3l-1.5 2z', '#fff'), 10, 24)}</div>
    {/each}
  </div>
{/snippet}

<div class="app">
  <div class="title">
    <span class="t-ico"></span><span class="t-txt">YTLWorld[AutoCls(151216)应用图片] - 新数据库</span>
    <i class="t-shade"></i>
  </div>
  <div class="menu"><i class="m-grip"></i>{#each menus as m}<span>{m}</span>{/each}</div>
  {@render toolbar(row1)}
  {@render toolbar(row2)}

  <div class="main">
    <div class="left">
      <div class="pn p1">{@render panelHead('花纹图例')}{@render tree(tree1)}</div>
      <div class="tabs">
        <span class="tb"><i>{@html tabIcoPt}</i>点图例</span>
        <span class="tb"><i>{@html tabIcoLn}</i>线图例</span>
        <span class="tb on"><i>{@html tabIcoPat}</i>花纹图例</span>
      </div>
      <div class="pn p2">{@render panelHead('颜色图例')}{@render tree(tree2)}</div>
      <div class="tabs">
        <span class="tb"><i>{@html tabIcoAnno}</i>标注样式</span>
        <span class="tb"><i>{@html tabIcoFont}</i>字体图例</span>
        <span class="tb on"><i>{@html tabIcoCol}</i>颜色图例</span>
      </div>
    </div>

    <div class="center">
      <svg class="doc" width="1417" height="828" viewBox="270 84 1417 828">
        <defs>
          <linearGradient id="rt" x1="0" y1="0" x2="0" y2="1"><stop offset="0" stop-color="#666"/><stop offset=".28" stop-color="#d0d0d0"/><stop offset=".45" stop-color="#fff"/><stop offset=".78" stop-color="#fff"/><stop offset=".9" stop-color="#bbb"/><stop offset="1" stop-color="#8c8c8c"/></linearGradient>
          <linearGradient id="rl" x1="0" y1="0" x2="1" y2="0"><stop offset="0" stop-color="#777"/><stop offset=".25" stop-color="#d8d8d8"/><stop offset=".45" stop-color="#fff"/><stop offset=".75" stop-color="#fff"/><stop offset=".92" stop-color="#bbb"/><stop offset="1" stop-color="#999"/></linearGradient>
          <filter id="bl" x="-5%" y="-5%" width="110%" height="110%"><feGaussianBlur stdDeviation="0.9"/></filter>
        </defs>
        <rect x="270" y="84" width="1417" height="828" fill="#fff"/>
        <rect x="1685" y="84" width="2" height="828" fill="#e8e8e8"/>
        {#each lonX as x}<line x1={x} y1="100" x2={x} y2="912" stroke="#b0b0b0"/>{/each}
        {#each latY as y}<line x1="287" y1={y} x2="1685" y2={y} stroke="#b0b0b0"/>{/each}

        <g filter="url(#bl)">
          {#each counties as d}<path {d} fill="none" stroke="#c4c4a0" stroke-width="1.3"/>{/each}
          {#each coast as d}<path {d} fill="none" stroke="#5c9a9c" stroke-width="3.4" stroke-linejoin="round"/>{/each}
          <path d={coastTip} fill="none" stroke="#2f6fb8" stroke-width="3.2" stroke-linejoin="round"/>
          {#each labels as l}
            <text x={l[1]} y={l[2]} text-anchor="middle" font-size={l[3]} font-family="Noto Sans CJK SC, sans-serif" fill="#444" font-weight={l[3] > 12 ? 700 : 400}>{l[0]}</text>
          {/each}
        </g>
        <rect x="487.5" y="172.5" width="571" height="688" fill="#00ff00" fill-opacity=".5" stroke="#f00"/>

        <rect x="270" y="84" width="1414" height="16" fill="url(#rt)"/>
        <rect x="270" y="84" width="17" height="828" fill="url(#rl)"/>
        <rect x="270" y="84" width="17" height="16" fill="#e4e4e4"/>
        <rect x="287" y="84" width="34" height="16" fill="url(#rt)"/>
        <path d="M287 132V100H320Q326 99 332 85" fill="none" stroke="#555" stroke-width="1.2"/>
        <path d="M287 130Q286 137 272 144" fill="none" stroke="#555" stroke-width="1.2"/>
        <rect x="1647" y="91" width="36" height="9" fill="#bbb" fill-opacity=".3"/>
        <path d="M1634 85Q1640 90 1642 95 1645 99 1650 99H1683V85" fill="none" stroke="#555"/>
        <text x="273" y="96" class="rt lb">LB</text>
        {#each lonX as x, i}
          <line x1={x} y1="84" x2={x} y2="100" stroke="#000"/>
          <text x={x - 1} y="96" text-anchor="end" class="rt">121°</text>
          <text x={x + 2} y="96" class="rt">10'{lon[i]}"</text>
        {/each}
        {#each latY as y, i}
          <line x1="270" y1={y} x2="287" y2={y} stroke="#000"/>
          <text transform="translate(285 {y + 2}) rotate(-90)" text-anchor="end" class="rt">25°</text>
          <text transform="translate(285 {y - 2}) rotate(-90)" class="rt">54'{lat[i]}"</text>
        {/each}
      </svg>
      <div class="doc-tabs">
        <span class="dt">{@html house}<em>YTLWorld起始页</em><b>X</b></span>
        <span class="dt dt-on">{@html globe}<em>空间图形编辑</em><b>X</b></span>
        <span class="dt-nav">{@html sv(ln('M1 2v9', '#888', 1.4) + fl('M9 2v9l-5-4.5z', '#888') + fl('M20 2v9l-5-4.5z', '#888') + fl('M27 2v9l5-4.5z', '#888') + fl('M36 2v9l5-4.5z', '#888') + ln('M42 2v9', '#888', 1.4), 44, 13)}</span>
      </div>
    </div>

    <div class="right">
      <div class="pn r1">{@render panelHead('布局', false)}
        <div class="rtree">
          <div class="rrow"><i class="box minus b1"></i><i class="dots d7"></i><span>{@html rootIco}</span><span class="rg">{@html gear}</span><span class="rl">{@html lock}</span></div>
          {#each rightRows1 as r}
            <div class="rrow r-sub"><i class="reddot" class:hide={!r.dot}></i><i class="box plus"></i><i class="dots d7"></i><span>{@html tblIco}</span><span class="rg2">{@html gear}</span></div>
          {/each}
          <i class="rtree-v v1"></i>
          <div class="rsb"><i class="rsb-a"></i><i class="rsb-t"></i></div>
        </div>
      </div>
      <div class="rtabs top"><span class="tb">{@html globe}空间图形</span></div>
      <div class="pn r2">{@render panelHead('柱状图', false)}
        <div class="rtree">
          <div class="rrow"><i class="box minus b1"></i><i class="dots d7"></i><span>{@html rootIco}</span><span class="rg">{@html gear}</span><span class="rl">{@html lock}</span></div>
          <div class="rrow r-sub"><i class="reddot"></i><i class="box plus"></i><i class="dots d7"></i><span>{@html chartDoc}</span><span class="rg2">{@html gear}</span></div>
          <i class="rtree-v v2"></i>
          <div class="rsb"><i class="rsb-a"></i><i class="rsb-t"></i></div>
        </div>
      </div>
      <div class="rtabs top"><span class="tb on">{@html barIco}柱状图</span><span class="tb2">{@html sv(fl('M0 2l7 5 7-5v12H0z', '#e040c0', '#933'), 14, 16)}</span></div>
      <div class="pn r3">{@render panelHead('查询表', false)}
        <div class="rtree q">
          {#each queryRows as q}<div class="qrow"><i class="dots d12"></i>{@html eye}</div>{/each}
          <i class="rtree-v v3"></i>
          <div class="rsb"><i class="rsb-a"></i><i class="rsb-t"></i></div>
        </div>
      </div>
      <div class="rtabs"><span class="tb">{@html propIco}属性表</span><span class="tb2 lt">{@html barIco}</span></div>
    </div>

    <!-- dialog floats over the map -->
    <div class="dlg">
      <div class="d-title">
        <span class="d-ico">{@html sv(rc(0, 0, 16, 16, '#10206a', '#fff') + circ(8, 7, 3, '#cde', '#fff') + rc(1, 11, 5, 4, '#e8c020', 'none') + ln('M8 1v14M2 7h12', '#9ab'), 16, 16)}</span>
        <span>YTLWorld图形输出到图像文件</span>
        <span class="d-close">{@html sv(ln('M1 1l8 7M9 1L1 8', '#fff', 2.2), 10, 9)}</span>
      </div>
      <div class="d-nav">
        <span class="nav-c">{@html sv(ln('M8 6H4l3-3M4 6l3 3', '#f4f4f4', 1.2), 12, 12)}</span>
        <span class="nav-c">{@html sv(ln('M3 6h4L4 3m3 3L4 9', '#f4f4f4', 1.2), 12, 12)}</span>
        <i class="nav-dd"></i>
        <div class="addr">
          <span class="a-ico">{@html fIco}</span>
          <i class="crumb"></i>
          {#each addr as a}<span class="a-t">{a}</span><i class="crumb"></i>{/each}
          <i class="tri a-dd"></i>
          <span class="refresh">{@html sv(ln('M2 7l4-4v3h3', '#2f74c9', 1.6) + ln('M13 8l-4 4V9H6', '#1a5aa0', 1.6), 15, 15)}</span>
        </div>
        <div class="search"><em>搜索 YtlWorldData(3.86)</em>{@html sv(circ(9, 5.5, 4, 'none', '#2f82c8', 1.8) + ln('M6 9l-4 4', '#1a5aa0', 2.2), 15, 15)}</div>
      </div>
      <div class="d-body">
        <div class="d-tb">
          <span class="d-org">组织 <i class="tri"></i></span>
          <span class="d-nf">新建文件夹</span>
          <span class="d-view">{@html sv(ln('M1 1.5h3v3H1zM1 6.5h3v3H1zM1 11.5h3v3H1z', '#666') + ln('M6 3h9M6 8h9M6 13h9', '#666'), 16, 16)}</span>
          <i class="tri d-vt"></i>
          <span class="d-help">?</span>
        </div>
        <div class="d-main">
          <div class="side">
            {#each sidebar as s}
              <div class="s-row lv{s.lv ?? 0}" class:hov={s.hov}>{#if s.text}<span class="s-ic">{@html sIcons[s.ic]}</span>{s.text}{/if}</div>
            {/each}
          </div>
          <div class="vsb">
            <i class="vs-up"></i>
            <i class="vs-th"><b></b></i>
            <i class="vs-dn"></i>
          </div>
          <div class="list">
            <div class="l-head">
              <span class="lh-name">名称<i class="sortm"></i></span><span>修改日期</span><span>类型</span><span>大小</span>
            </div>
            {#each files as f}
              <div class="l-row"><span class="nm">{@html fIco}<em>{f[0]}</em></span><span class="dt2">{f[1]}</span><span class="dt2">文件夹</span><span></span></div>
            {/each}
            <div class="l-row"><span class="nm">{@html picIco}<em class="pic-n">新图片</em></span><span class="dt2">2017-04-06 9:13</span><span class="dt2">JPEG 图像</span><span class="dt2 size">293 KB</span></div>
          </div>
        </div>
        <div class="d-foot">
          <div class="f-row"><label for="fn">文件名(N):</label><div class="f-in" id="fn"><span class="sel">新图片</span><i class="tri blk"></i></div></div>
          <div class="f-row r2nd"><label for="ft">保存类型(T):</label><div class="f-in f-sel" id="ft"><span>JPEG压缩方案(*.JPG)</span><i class="tri blk"></i></div></div>
          <div class="f-btm">
            <span class="hide-f"><i class="hf-ic">{@html sv(fl('M3 8l4-4 4 4z', '#456'), 14, 12)}</i>隐藏文件夹</span>
            <span class="btn def">保存(S)</span>
            <span class="btn">取消</span>
          </div>
          <span class="rgrip">{@html sv(ln('M9 1v1M6 4v1M9 4v1M3 7v1M6 7v1M9 7v1', '#aaa'), 11, 9)}</span>
        </div>
      </div>
    </div>
  </div>

  <div class="strip"></div>
  <div class="st1">
    <b class="s1b">导出图形到图片：</b>
    <span class="s1a">鼠标操作>> 拾取输出矩形范围的两个角点</span><i class="vs"></i>
    <span class="blue">输出当前显示范围</span><i class="vs"></i>
    <span class="s-dpi">精度(DPI)</span><span class="inp w35">300</span>
    <span class="cmb">高<i class="tri blk"></i></span><i class="vs"></i>
    <span class="s-dms">图形窗口中心(DMS)>></span><span class="l1">经度</span><span class="inp w83">1211040.9948</span>
    <span class="l1b">纬度</span><span class="inp w74">255457.0919</span>
    <span class="l2">显示比例尺</span><span class="inp w63">521.549</span>
  </div>
  <div class="st2">
    <b class="s2b">操作提示：</b>
    <span class="ml8 s-dms">第一角点位置(DMS)>></span><span class="ml11">经度</span><span class="inp2 w80">-39453062457.5</span>
    <span class="ml8">纬度</span><span class="inp2 w75">26407461041.0</span><i class="vs v8"></i>
    <span class="s-2nd">第二角点>></span><span class="ml12">经度</span><span class="inp2 w80">5692623857.36</span>
    <span class="ml8">纬度</span><span class="inp2 w75">-28067810703</span><i class="vs v8"></i>
    <i class="ck"></i><span>输入高宽</span>
    <span class="logo">{@html sv(circ(16, 17, 16, '#1f8a4a', '#0d5a2a') + circ(16, 17, 9, '#fff', 'none') + circ(16, 17, 6, '#1f8a4a', 'none'), 32, 34)}</span>
  </div>
</div>

<style>
  :global(body) { margin: 0; }
  .app { width: 1772px; height: 1000px; overflow: hidden; background: #4d4d4d; position: relative; font: 12px "Noto Sans CJK SC", "Noto Sans", sans-serif; color: #000; }
  i, em { font-style: normal; display: block; }
  .title { height: 8px; background: linear-gradient(#eda97a, #e8a678 85%, #f2d0b0); position: relative; display: flex; overflow: hidden; }
  .t-ico { width: 13px; height: 8px; background: #10206a; margin-right: 9px; }
  .t-txt { font-size: 13px; line-height: 13px; margin-top: -6px; color: #5a4030; white-space: nowrap; }
  .t-shade { position: absolute; left: 1499px; width: 141px; top: 0; height: 8px; background: linear-gradient(to right, transparent, #9c7a5c 5%, #9c7a5c 95%, transparent); }
  .menu { height: 24px; display: flex; align-items: center; gap: 15px; color: #f4f4f4; padding-left: 16.5px; position: relative; white-space: nowrap; font-size: 12px; }
  .m-grip { position: absolute; left: 5px; top: 6px; width: 2px; height: 12px; background: repeating-linear-gradient(#ddd 0 2px, transparent 2px 4px); }
  .tbar { display: flex; height: 24px; margin-bottom: 2px; overflow: hidden; }
  .grp { height: 24px; flex: none; display: flex; align-items: center; padding-left: 10px; box-sizing: border-box; position: relative; border-radius: 2px; background: linear-gradient(#cdd0d6, #c4c7cd 45%, #a4a7ad); }
  .grip { position: absolute; left: 4px; top: 6px; width: 2px; height: 12px; background: repeating-linear-gradient(#222 0 2px, transparent 2px 4px); }
  .tbtn { width: 22px; height: 24px; flex: none; display: flex; align-items: center; justify-content: center; }
  .tsep { width: 1px; height: 15px; background: #555; margin: 0 3px; flex: none; border-right: 1px solid #eee; }
  .tsep.wide { margin: 0 5px; }
  .drop { flex: none; width: 0; height: 0; margin: 0 3px; border: 4px solid transparent; border-top-color: #666; border-bottom: 0; }
  .combo { height: 18px; background: #f0f0f2; border: 1px solid #bbb; box-sizing: border-box; flex: none; position: relative; }
  .combo.mleft { margin-left: 2px; }
  .combo-a { position: absolute; right: 4px; top: 6px; border: 4px solid transparent; border-top-color: #888; border-bottom: 0; }
  .chev { width: 10px; height: 24px; flex: none; background: linear-gradient(#70737a, #9a9da3); }

  .main { display: flex; position: relative; height: 851px; gap: 4px; }
  .left { width: 266px; flex: none; }
  .pn { box-sizing: border-box; background: #9f9f9f; border: 1px solid #d6d6d6; border-bottom: 0; display: flex; flex-direction: column; border-radius: 2px 2px 0 0; }
  .p1 { height: 424px; }
  .p2 { height: 371px; margin-top: 2px; }
  .ph { height: 19px; flex: none; display: flex; align-items: center; padding: 0 0 4px 3px; box-sizing: border-box; color: #555; font-size: 12.5px; position: relative; white-space: nowrap; }
  .pin { position: absolute; left: 233px; top: 4px; }
  .cls { position: absolute; left: 250px; top: 4px; }
  .ptb { height: 25px; flex: none; margin: 1px 2px 0; display: flex; align-items: center; gap: 4px; padding-left: 6px; background: linear-gradient(#d2d5dc, #c4c7ce 40%, #9ea2a8); border: 1px solid #e2e2e2; border-bottom: 0; box-sizing: border-box; }
  .ptb > span { display: flex; }
  .ptb-sep { width: 1px; height: 15px; background: #555; margin: 0 4px; }
  .tree { flex: 1; background: #fff; margin: 0 2px 0; position: relative; padding-top: 1px; border: solid #ccc; border-width: 0 1px 1px; box-sizing: border-box; font-size: 12px; }
  .tree-v { position: absolute; left: 33px; top: 20px; border-left: 1px dotted #777; }
  .tr { height: 24px; display: flex; align-items: center; white-space: nowrap; }
  .ti { display: flex; flex: none; }
  .box { width: 9px; height: 9px; border: 1px solid #888; box-sizing: border-box; background: #fff; position: relative; flex: none; }
  .box::before { content: ""; position: absolute; left: 1px; right: 1px; top: 3px; height: 1px; background: #000; }
  .box.plus::after { content: ""; position: absolute; top: 1px; bottom: 1px; left: 3px; width: 1px; background: #000; }
  .dots { height: 0; border-top: 1px dotted #777; flex: none; }
  .d7 { width: 6px; } .d9 { width: 8px; } .d12 { width: 12px; }
  .tr-root { padding-left: 10px; }
  .tt-root { margin-left: 7px; font-weight: 700; font-size: 13px; }
  .tr-item { padding-left: 33px; }
  .tr-folder { padding-left: 29px; }
  .tt { margin-left: 4px; }
  .tt-f { margin-left: 6px; }
  .bold { font-weight: 700; font-size: 13px; }
  .sw { flex: none; margin-left: 4px; box-sizing: border-box; border: 1px solid #000; }
  .sw-big { width: 40px; height: 22px; background: #fff; }
  .sw-black { width: 21px; height: 12px; background: #000; margin-left: 9px; }
  .sw-clear { width: 21px; height: 12px; background: #fff; margin-left: 9px; }
  .tree .sw-black + .tt, .tree .sw-clear + .tt { margin-left: 7px; }
  .tabs { height: 27px; display: flex; align-items: center; color: #eee; font-size: 12px; padding-left: 7px; gap: 9px; }
  .tb { display: flex; align-items: center; gap: 3px; white-space: nowrap; }
  .tb > i { display: flex; }
  .tb.on { background: linear-gradient(#dfe8ee, #f0f4f6); color: #222; padding: 2px 3px; margin-left: -2px; border-radius: 3px; border: 1px solid #c9dbe6; box-sizing: border-box; height: 22px; }

  .center { width: 1417px; flex: none; }
  .doc { display: block; }
  :global(.rt) { font: 12.5px "Liberation Serif", serif; fill: #111; }
  .lb { font-size: 13px; }
  .doc-tabs { height: 23px; background: #9f9f9f; border-top: 1px solid #555; border-bottom: 1px solid #f0f0f0; box-sizing: border-box; display: flex; padding-left: 15px; position: relative; font-size: 12px; }
  .dt { display: flex; align-items: center; height: 21px; white-space: nowrap; width: 131px; flex: none; box-sizing: border-box; }
  .dt em { margin-left: 4px; color: #222; min-width: 84px; }
  .dt b { font: 14px "Liberation Sans", sans-serif; margin-left: 10px; }
  .dt-on { background: #fff; width: 126px; padding-left: 8px; border: 1px solid #777; border-top: 0; }
  .dt-on em { color: #10c; margin-left: 3px; min-width: 72px; }
  .dt-nav { position: absolute; left: 1368px; top: 4px; }

  .right { width: 120px; flex: none; }
  .right .pn { width: 120px; }
  .r1 { height: 201px; } .r2 { height: 372px; margin-top: 0; } .r3 { height: 195px; margin-top: 0; }
  .rtree { flex: 1; background: #fff; margin: 0 2px; position: relative; padding-top: 1px; box-sizing: border-box; }
  .rrow { height: 24px; display: flex; align-items: center; padding-left: 9px; }
  .rrow > span { display: flex; }
  .rg { margin-left: 5px; } .rl { margin-left: 4px; }
  .rg2 { margin-left: 5px; }
  .r-sub { padding-left: 30px; position: relative; }
  .r-sub .d7 { width: 7px; }
  .reddot { position: absolute; left: 18px; top: 8px; width: 9px; height: 9px; border-radius: 50%; background: #f00; }
  .reddot.hide { display: none; }
  .rtree-v { position: absolute; left: 34px; top: 22px; height: 40px; border-left: 1px dotted #777; }
  .v2 { height: 16px; }
  .rtree.q { padding-top: 0; }
  .qrow { height: 24px; display: flex; align-items: center; padding-left: 55px; }
  .v3 { left: 54px; top: 0; height: 134px; }
  .rsb { position: absolute; left: 0; right: 0; bottom: 0; height: 17px; background: #efefef; border-top: 1px solid #ccc; border-bottom: 1px solid #ccc; }
  .rsb-a { position: absolute; left: 6px; top: 4px; border: 4px solid transparent; border-right-color: #222; border-left: 0; }
  .rsb-t { position: absolute; left: 18px; right: 0; top: 1px; height: 14px; background: linear-gradient(#f8f8f8, #c8c8c8); border: 1px solid #aaa; border-radius: 2px; }
  .rtabs { height: 28px; display: flex; align-items: center; color: #eee; font-size: 12px; padding-left: 5px; gap: 7px; white-space: nowrap; }
  .rtabs.top { align-items: flex-start; padding-top: 2px; box-sizing: border-box; }
  .r3 + .rtabs { height: 27px; }
  .rtabs .tb.on { margin-left: -1px; height: 20px; }
  .tb2 { display: flex; background: #dfe8ee; padding: 1px; }
  .tb2.lt { height: 18px; }

  .dlg { position: absolute; left: 628px; top: 138px; width: 959px; height: 538px; box-sizing: border-box; border: 1px solid #333; border-radius: 7px; box-shadow: 1px 6px 14px 2px rgba(0, 0, 0, .6); background: linear-gradient(to right, #a9c073 0, #aec47c 431px, #e8c9af 431px, #ebcdb5 100%); padding: 0 6px 6px; display: flex; flex-direction: column; color: #111; font-family: "Noto Sans", "Noto Sans CJK SC", sans-serif; }
  .d-title { height: 30px; display: flex; align-items: center; font-size: 13px; padding: 0 0 5px 1px; box-sizing: border-box; position: relative; flex: none; white-space: nowrap; }
  .d-ico { display: flex; margin-right: 5px; }
  .d-close { position: absolute; right: 0; top: -1px; width: 45px; height: 19px; border: 1px solid #5a2a20; border-top: 0; border-radius: 0 0 4px 4px; box-sizing: border-box; background: linear-gradient(#e9a291, #c64a30 55%, #d57a60); display: flex; align-items: center; justify-content: center; }
  .d-nav { height: 33px; display: flex; align-items: center; flex: none; padding: 0 0 5px 4px; box-sizing: border-box; }
  .nav-c { width: 24px; height: 24px; box-sizing: border-box; border-radius: 50%; border: 1px solid #6a7460; background: radial-gradient(rgba(215, 218, 205, .8), rgba(170, 178, 150, .65)); display: flex; align-items: center; justify-content: center; margin-right: 3px; flex: none; }
  .nav-dd { border: 4px solid transparent; border-top-color: #d8d8d8; border-bottom: 0; margin: 0 6px 0 1px; flex: none; }
  .addr { width: 664px; height: 22px; margin-left: 0; flex: none; box-sizing: border-box; border: 1px solid #4a4a40; border-radius: 2px; background: rgba(255, 255, 255, .62); display: flex; align-items: center; padding-left: 3px; font-size: 12.5px; position: relative; }
  .a-ico { display: flex; margin-right: 8px; }
  .a-t { margin: 0 8px 0 7px; color: #222; white-space: nowrap; letter-spacing: -.1px; }
  .crumb { border: 4px solid transparent; border-left-color: #111; border-right: 0; flex: none; margin-left: 4px; }
  .a-dd { position: absolute; right: 32px; top: 8px; }
  .refresh { position: absolute; right: 0; top: 0; width: 25px; height: 20px; border-left: 1px solid #555; display: flex; align-items: center; justify-content: center; }
  .search { width: 201px; margin-left: 7px; height: 22px; box-sizing: border-box; flex: none; border: 1px solid #a8a090; background: rgba(255, 255, 255, .55); border-radius: 2px; display: flex; align-items: center; justify-content: space-between; padding: 0 3px 0 6px; color: #666; font-size: 12.5px; }
  .search em { font-style: italic; white-space: nowrap; }
  .d-body { flex: 1; display: flex; flex-direction: column; border: 1px solid #555; background: #fff; margin-right: 0; min-height: 0; box-sizing: border-box; }
  .d-tb { height: 31px; flex: none; display: flex; align-items: center; position: relative; background: linear-gradient(#fafcff, #e8eff9 40%, #dce6f4 50%, #d8e3f2); border-bottom: 1px solid #a9b8cb; color: #1e395b; font-size: 12.5px; padding-left: 18px; box-sizing: border-box; white-space: nowrap; }
  .d-org { display: flex; align-items: center; gap: 4px; }
  .d-nf { margin-left: 29px; }
  .d-view { position: absolute; left: 851px; top: 8px; display: flex; }
  .d-vt { position: absolute; left: 877px; top: 13px; }
  .d-help { position: absolute; left: 914px; top: 7px; width: 17px; height: 17px; border-radius: 50%; background: #2b5fb0; color: #fff; border: 1px solid #888; box-sizing: border-box; display: flex; align-items: center; justify-content: center; font: bold 13px "Liberation Sans", sans-serif; }
  .tri { border: 4px solid transparent; border-top-color: #1e2f55; border-bottom: 0; }
  .blk { border-top-color: #000; }
  .d-main { height: 313px; flex: none; display: flex; }
  .side { width: 142px; flex: none; padding: 11px 0 0 2px; box-sizing: border-box; font-size: 12.5px; color: #1e395b; }
  .s-row { height: 23px; display: flex; align-items: center; white-space: nowrap; border: 1px solid transparent; box-sizing: border-box; }
  .s-ic { display: flex; width: 17px; height: 16px; flex: none; margin-right: 3px; }
  .lv0 { padding-left: 18px; }
  .lv1 { padding-left: 29px; }
  .hov { background: linear-gradient(#f8f8f8, #e6e6e6); border-color: #ddd; border-radius: 3px; }
  .vsb { width: 15px; flex: none; background: #f1f1f1; position: relative; border-right: 1px solid #d8e0ec; box-sizing: content-box; margin-right: 2px; }
  .vs-up { position: absolute; left: 4px; top: 8px; border: 4px solid transparent; border-bottom-color: #333; border-top: 0; }
  .vs-dn { position: absolute; left: 4px; bottom: 6px; border: 4px solid transparent; border-top-color: #333; border-bottom: 0; }
  .vs-th { position: absolute; left: 0; right: 0; top: 20px; height: 163px; background: linear-gradient(to right, #f3f3f3, #cfcfcf); border: 1px solid #aaa; border-radius: 2px; box-sizing: border-box; }
  .vs-th b { display: block; position: absolute; left: 4px; right: 4px; top: 77px; height: 7px; background: repeating-linear-gradient(#777 0 1px, transparent 1px 3px); }
  .list { flex: 1; min-width: 0; padding-left: 18px; box-sizing: border-box; }
  .l-head { height: 27px; display: grid; grid-template-columns: 259px 120px 120px 80px; align-items: center; color: #4c607a; font-size: 12.5px; margin-bottom: 7px; }
  .l-head span { height: 25px; display: flex; align-items: center; border-left: 1px solid #e4e9f0; padding-left: 6px; margin-left: -6px; position: relative; }
  .l-head span:last-child { border-right: 1px solid #e4e9f0; }
  .lh-name { border-left: 0 !important; padding-left: 0 !important; margin-left: 0 !important; }
  .sortm { position: absolute; left: 121px; top: 2px; border: 4px solid transparent; border-bottom-color: #9db8d2; border-top: 0; }
  .l-row { height: 21px; display: grid; grid-template-columns: 259px 120px 145px 41px; align-items: center; font-size: 12.5px; }
  .nm { display: flex; align-items: center; color: #1e395b; }
  .nm em { margin-left: 5px; }
  .pic-n { margin-left: 2px !important; }
  .dt2 { color: #6d6d6d; white-space: nowrap; }
  .size { text-align: right; }
  .d-foot { flex: 1; background: #f0f0f0; position: relative; font-size: 12.5px; padding-top: 11px; box-sizing: border-box; color: #222; }
  .f-row { display: flex; align-items: center; height: 23px; }
  .r2nd { margin-top: 4px; }
  .f-row label { width: 121px; text-align: right; margin-right: 5px; flex: none; white-space: nowrap; }
  .f-in { width: 813px; height: 23px; box-sizing: border-box; background: #fff; border: 1px solid #a9d3e8; border-top-color: #4a86b4; border-radius: 2px; display: flex; align-items: center; justify-content: space-between; padding: 0 6px 0 3px; }
  .sel { background: #3399ff; color: #fff; line-height: 17px; }
  .f-sel { background: linear-gradient(#f2f2f2 45%, #d8d8d8 50%, #cfcfcf); border: 1px solid #777; }
  .f-btm { position: absolute; left: 0; right: 0; top: 82px; height: 27px; display: flex; align-items: center; }
  .hide-f { display: flex; align-items: center; position: absolute; left: 11px; top: 9px; }
  .hf-ic { width: 16px; height: 16px; border-radius: 50%; border: 1px solid #aab; background: linear-gradient(#fff, #cfd8e4); box-sizing: border-box; display: flex; align-items: center; justify-content: center; margin-right: 5px; }
  .btn { position: absolute; left: 841px; width: 86px; height: 28px; border: 1px solid #707070; border-radius: 3px; background: linear-gradient(#f4f4f4, #ebebeb 45%, #d7d7d7 50%, #cfcfcf); box-sizing: border-box; display: flex; align-items: center; justify-content: center; }
  .def { left: 741px; border: 2px solid #3bb0e0; background: linear-gradient(#f2f8fb, #e6eff4 45%, #cfdfe8 50%, #c6d6df); }
  .rgrip { position: absolute; right: 1px; bottom: 2px; display: flex; }

  .strip { height: 5px; }
  .st1 { height: 25px; background: #9f9f9f; display: flex; align-items: center; padding-left: 6px; font-size: 12px; color: #111; white-space: nowrap; }
  .s1b { width: 109px; flex: none; font-weight: 700; font-size: 12.5px; }
  .s1a { width: 224px; flex: none; }
  .vs { width: 1px; height: 17px; background: #333; flex: none; margin: 0 9px; }
  .v8 { margin: 0 8px; }
  .blue { color: #10c; width: 96px; flex: none; }
  .s-dpi { width: 51px; flex: none; }
  .s-dms { width: 120px; flex: none; }
  .s-2nd { width: 63px; flex: none; }
  .inp { height: 19px; background: #fff; display: flex; align-items: center; box-sizing: border-box; padding-left: 1px; margin-left: 2px; overflow: hidden; font-family: "Liberation Sans", sans-serif; flex: none; }
  .w35 { width: 35px; } .w83 { width: 83px; } .w75 { width: 75px; } .w74 { width: 74px; } .w63 { width: 63px; } .w80 { width: 80px; }
  .cmb { width: 59px; height: 22px; margin-left: 9px; border: 1px solid #777; border-radius: 3px; background: linear-gradient(#fff, #d8d8d8); box-sizing: border-box; display: flex; align-items: center; justify-content: space-between; padding: 0 6px 0 3px; flex: none; }
  .l1 { margin-left: 13px; }
  .l1b { margin-left: 4px; }
  .l2 { margin-left: 18px; }
  .l2 + .inp { margin-left: 4px; }
  .st2 { height: 35px; background: #fff; display: flex; align-items: center; padding: 3px 0 0 6px; box-sizing: border-box; font-size: 12px; color: #111; position: relative; white-space: nowrap; }
  .s2b { font-weight: 700; font-size: 12.5px; width: 62px; flex: none; }
  .ml8 { margin-left: 8px; } .ml11 { margin-left: 11px; } .ml12 { margin-left: 12px; }
  .inp2 { height: 20px; border: 1px solid #7f9db9; box-sizing: border-box; display: flex; align-items: center; padding-left: 1px; margin-left: 2px; overflow: hidden; font: 11.5px "Liberation Sans", sans-serif; flex: none; }
  .ck { width: 13px; height: 13px; border: 1px solid #8a8a8a; background: linear-gradient(#e8e8e8, #fff); box-sizing: border-box; margin: 0 3px 0 6px; flex: none; }
  .logo { position: absolute; left: 1755px; top: 17px; display: flex; }
</style>
